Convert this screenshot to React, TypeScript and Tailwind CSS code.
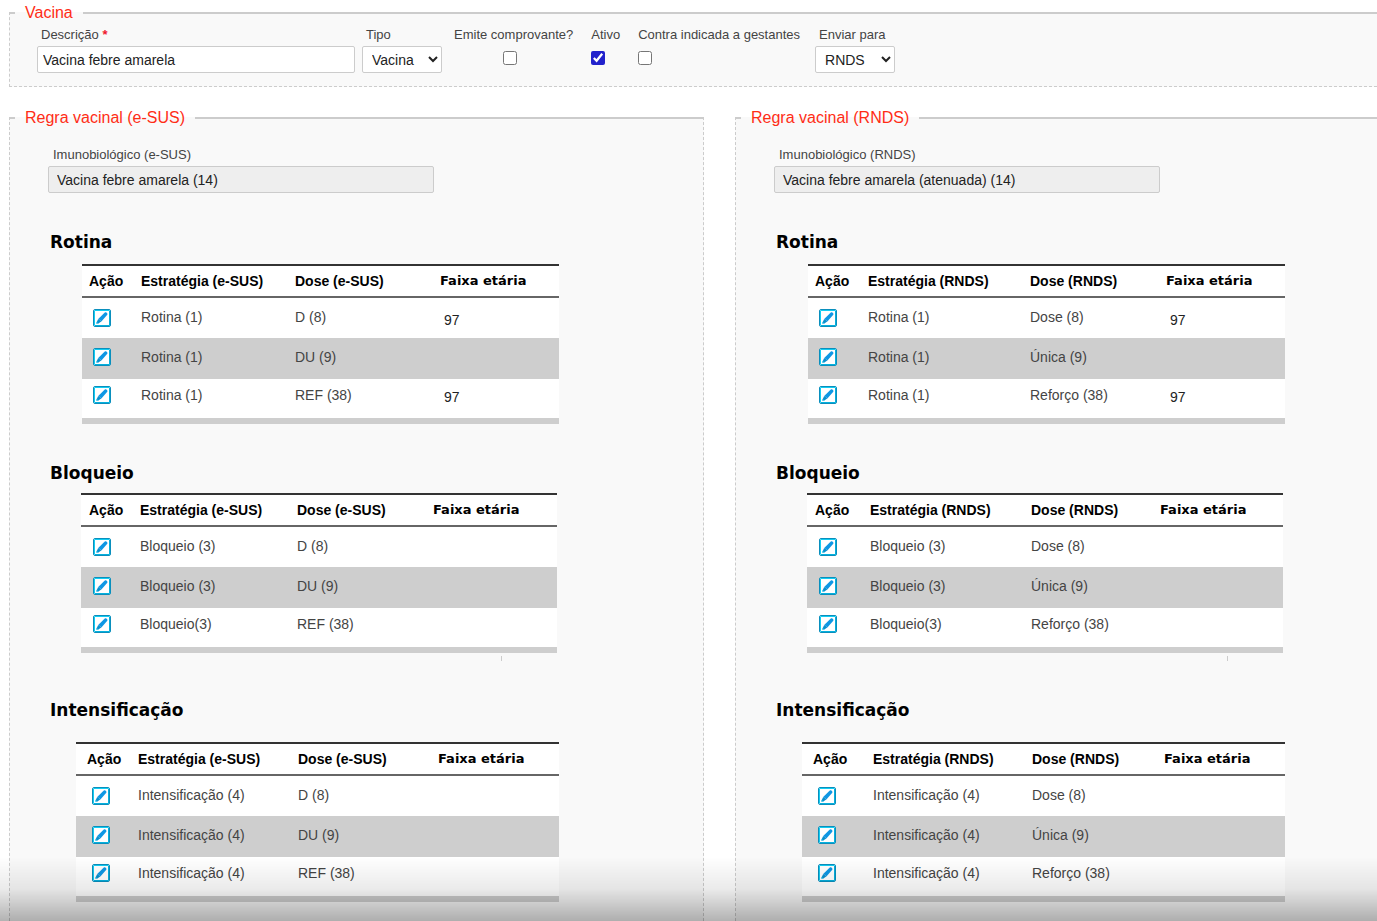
import type { ReactNode } from "react";

type Row = { estrategia: string; dose: string; faixa?: string };

type Rule = {
  title: string;
  rows: Row[];
  headingClass: string;
  tableClass: string;
  cols: [string, string, string];
  headPad: string;
  cellPad: string;
  mark?: boolean;
};

function EditIcon() {
  return (
    <svg width="18" height="18" viewBox="0 0 18 18" className="block" aria-hidden="true">
      <rect x="0.5" y="0.5" width="17" height="17" rx="1.5" fill="#ffffff" stroke="#0a8fbd" />
      <rect x="1.5" y="1.5" width="15" height="15" rx="0.5" fill="none" stroke="#12cdf2" />
      <path d="M16.5 2v14.5H2" fill="none" stroke="#06b0dd" />
      <path d="M11.8 3.6c1.1-.9 3.2.8 2.5 2.2L8.6 12.3 5.2 10z" fill="#0e97e4" />
      <path d="M5.2 10l3.4 2.3-3.6 2.4-1.5-1.2z" fill="#0a8fce" />
      <path d="M3.7 12.7l1.7 1.5-2.2.8z" fill="#12b4e2" />
    </svg>
  );
}

function RuleTable({ rule, origin }: { rule: Rule; origin: string }) {
  return (
    <section>
      <h2
        className={`ml-10 font-['DejaVu_Sans',sans-serif] text-[17px] leading-5 font-bold text-black ${rule.headingClass}`}
      >
        {rule.title}
      </h2>
      <table
        className={`table-fixed border-collapse border-b-6 border-b-[#cecece] bg-white text-left text-sm leading-4 ${rule.tableClass}`}
      >
        <colgroup>
          <col className={rule.cols[0]} />
          <col className={rule.cols[1]} />
          <col className={rule.cols[2]} />
          <col />
        </colgroup>
        <thead>
          <tr className="h-8 border-t-2 border-b-2 border-t-[#333] border-b-[#666] text-black">
            <th className={`p-0 font-bold ${rule.headPad}`}>Ação</th>
            <th className="p-0 font-bold">Estratégia ({origin})</th>
            <th className="p-0 font-bold">Dose ({origin})</th>
            <th className="p-0 font-['DejaVu_Sans',sans-serif] text-[13px] font-bold">Faixa etária</th>
          </tr>
        </thead>
        <tbody className="text-[#444]">
          {rule.rows.map((row) => (
            <tr
              key={row.dose}
              className="h-[41px] last:h-[42px] even:bg-[#cecece] [&:last-child>td]:pb-2 even:[&>td]:pb-1"
            >
              <td className={`p-0 ${rule.cellPad}`}>
                <button type="button" aria-label={`Editar ${row.estrategia}, ${row.dose}`} className="block">
                  <EditIcon />
                </button>
              </td>
              <td className="p-0 pb-[2px]">{row.estrategia}</td>
              <td className="p-0 pb-[2px]">{row.dose}</td>
              <td className="p-0 pt-1 pl-1 text-[#222]">{row.faixa}</td>
            </tr>
          ))}
        </tbody>
      </table>
      {rule.mark && <div className="mt-[3px] ml-[491px] h-[5px] w-px bg-[#ccc]" />}
    </section>
  );
}

function Panel({ title, className, children }: { title: string; className: string; children: ReactNode }) {
  return (
    <fieldset
      className={`min-w-0 border border-t-2 border-dashed border-[#ccc] bg-[#f9f9f9] [border-top-style:solid] ${className}`}
    >
      <legend className="ml-[5px] px-[10px] text-base leading-5 text-[#ff2d16]">{title}</legend>
      {children}
    </fieldset>
  );
}

function RulePanel({
  origin,
  value,
  rules,
  className,
}: {
  origin: string;
  value: string;
  rules: Rule[];
  className: string;
}) {
  const id = `imuno-${origin}`;
  return (
    <Panel title={`Regra vacinal (${origin})`} className={`border-b-0 ${className}`}>
      <div className="mt-[19px] mb-[39px] ml-[38px] flex flex-col gap-[3px]">
        <label htmlFor={id} className="pl-[5px] text-[13px] leading-4 text-[#444]">
          Imunobiológico ({origin})
        </label>
        <input
          id={id}
          readOnly
          value={value}
          className="h-[27px] w-[386px] rounded-xs border border-[#ccc] bg-[#eee] px-2 text-sm text-[#222] outline-none"
        />
      </div>
      {rules.map((rule) => (
        <RuleTable key={rule.title} rule={rule} origin={origin} />
      ))}
    </Panel>
  );
}

const label = "text-[13px] leading-4 text-[#444] whitespace-nowrap";
const select = "h-[27px] w-20 rounded-xs border border-[#ccc] bg-white pl-[5px] text-sm text-[#222]";
const checkbox = "mt-[5px] size-[14px] accent-[#2222cc]";

const esus: Rule[] = [
  {
    title: "Rotina",
    rows: [
      { estrategia: "Rotina (1)", dose: "D (8)", faixa: "97" },
      { estrategia: "Rotina (1)", dose: "DU (9)" },
      { estrategia: "Rotina (1)", dose: "REF (38)", faixa: "97" },
    ],
    headingClass: "mb-3",
    tableClass: "ml-[72px] w-[477px]",
    cols: ["w-[59px]", "w-[154px]", "w-[145px]"],
    headPad: "pl-[7px]",
    cellPad: "pl-[11px]",
  },
  {
    title: "Bloqueio",
    rows: [
      { estrategia: "Bloqueio (3)", dose: "D (8)" },
      { estrategia: "Bloqueio (3)", dose: "DU (9)" },
      { estrategia: "Bloqueio(3)", dose: "REF (38)" },
    ],
    headingClass: "mt-[39px] mb-[10px]",
    tableClass: "ml-[71px] w-[476px]",
    cols: ["w-[59px]", "w-[157px]", "w-[136px]"],
    headPad: "pl-2",
    cellPad: "pl-3",
    mark: true,
  },
  {
    title: "Intensificação",
    rows: [
      { estrategia: "Intensificação (4)", dose: "D (8)" },
      { estrategia: "Intensificação (4)", dose: "DU (9)" },
      { estrategia: "Intensificação (4)", dose: "REF (38)" },
    ],
    headingClass: "mt-[39px] mb-[22px]",
    tableClass: "ml-[66px] w-[483px]",
    cols: ["w-[62px]", "w-[160px]", "w-[140px]"],
    headPad: "pl-[11px]",
    cellPad: "pl-4",
  },
];

const rnds: Rule[] = [
  {
    ...esus[0],
    rows: [
      { estrategia: "Rotina (1)", dose: "Dose (8)", faixa: "97" },
      { estrategia: "Rotina (1)", dose: "Única (9)" },
      { estrategia: "Rotina (1)", dose: "Reforço (38)", faixa: "97" },
    ],
    cols: ["w-[60px]", "w-[162px]", "w-[136px]"],
  },
  {
    ...esus[1],
    rows: [
      { estrategia: "Bloqueio (3)", dose: "Dose (8)" },
      { estrategia: "Bloqueio (3)", dose: "Única (9)" },
      { estrategia: "Bloqueio(3)", dose: "Reforço (38)" },
    ],
    cols: ["w-[63px]", "w-[161px]", "w-[129px]"],
  },
  {
    ...esus[2],
    rows: [
      { estrategia: "Intensificação (4)", dose: "Dose (8)" },
      { estrategia: "Intensificação (4)", dose: "Única (9)" },
      { estrategia: "Intensificação (4)", dose: "Reforço (38)" },
    ],
    cols: ["w-[71px]", "w-[159px]", "w-[132px]"],
  },
];

export default function App() {
  return (
    <div className="flex h-screen flex-col overflow-hidden bg-white pt-[3px] pl-[9px] font-['Liberation_Sans',Arial,sans-serif]">
      <Panel title="Vacina" className="border-r-0 pb-[13px]">
        <div className="mt-1 ml-[27px] flex items-start">
          <div className="flex flex-col gap-[3px]">
            <label htmlFor="descricao" className={`${label} pl-1`}>
              Descrição <span className="font-bold text-[#f0182d]">*</span>
            </label>
            <input
              id="descricao"
              defaultValue="Vacina febre amarela"
              className="h-[27px] w-[318px] rounded-xs border border-[#ccc] bg-white px-[5px] text-sm text-[#222]"
            />
          </div>
          <div className="ml-[7px] flex flex-col gap-[3px]">
            <label htmlFor="tipo" className={`${label} pl-1`}>
              Tipo
            </label>
            <select id="tipo" className={select}>
              <option>Vacina</option>
            </select>
          </div>
          <div className="ml-3 flex flex-col items-center gap-[3px]">
            <label htmlFor="comprovante" className={label}>
              Emite comprovante?
            </label>
            <input id="comprovante" type="checkbox" className={`${checkbox} mr-2`} />
          </div>
          <div className="ml-[18px] flex flex-col gap-[3px]">
            <label htmlFor="ativo" className={label}>
              Ativo
            </label>
            <input id="ativo" type="checkbox" defaultChecked className={checkbox} />
          </div>
          <div className="ml-[18px] flex flex-col gap-[3px]">
            <label htmlFor="gestantes" className={label}>
              Contra indicada a gestantes
            </label>
            <input id="gestantes" type="checkbox" className={checkbox} />
          </div>
          <div className="ml-[15px] flex flex-col gap-[3px]">
            <label htmlFor="enviar" className={`${label} pl-1`}>
              Enviar para
            </label>
            <select id="enviar" className={select}>
              <option>RNDS</option>
            </select>
          </div>
        </div>
      </Panel>
      <div className="mt-[21px] grid flex-1 grid-cols-[695fr_642fr] gap-x-[31px]">
        <RulePanel origin="e-SUS" value="Vacina febre amarela (14)" rules={esus} className="" />
        <RulePanel
          origin="RNDS"
          value="Vacina febre amarela (atenuada) (14)"
          rules={rnds}
          className="border-r-0"
        />
      </div>
      <div className="pointer-events-none fixed inset-x-0 bottom-0 h-16 bg-linear-to-b from-transparent via-black/8 to-black/30" />
    </div>
  );
}
